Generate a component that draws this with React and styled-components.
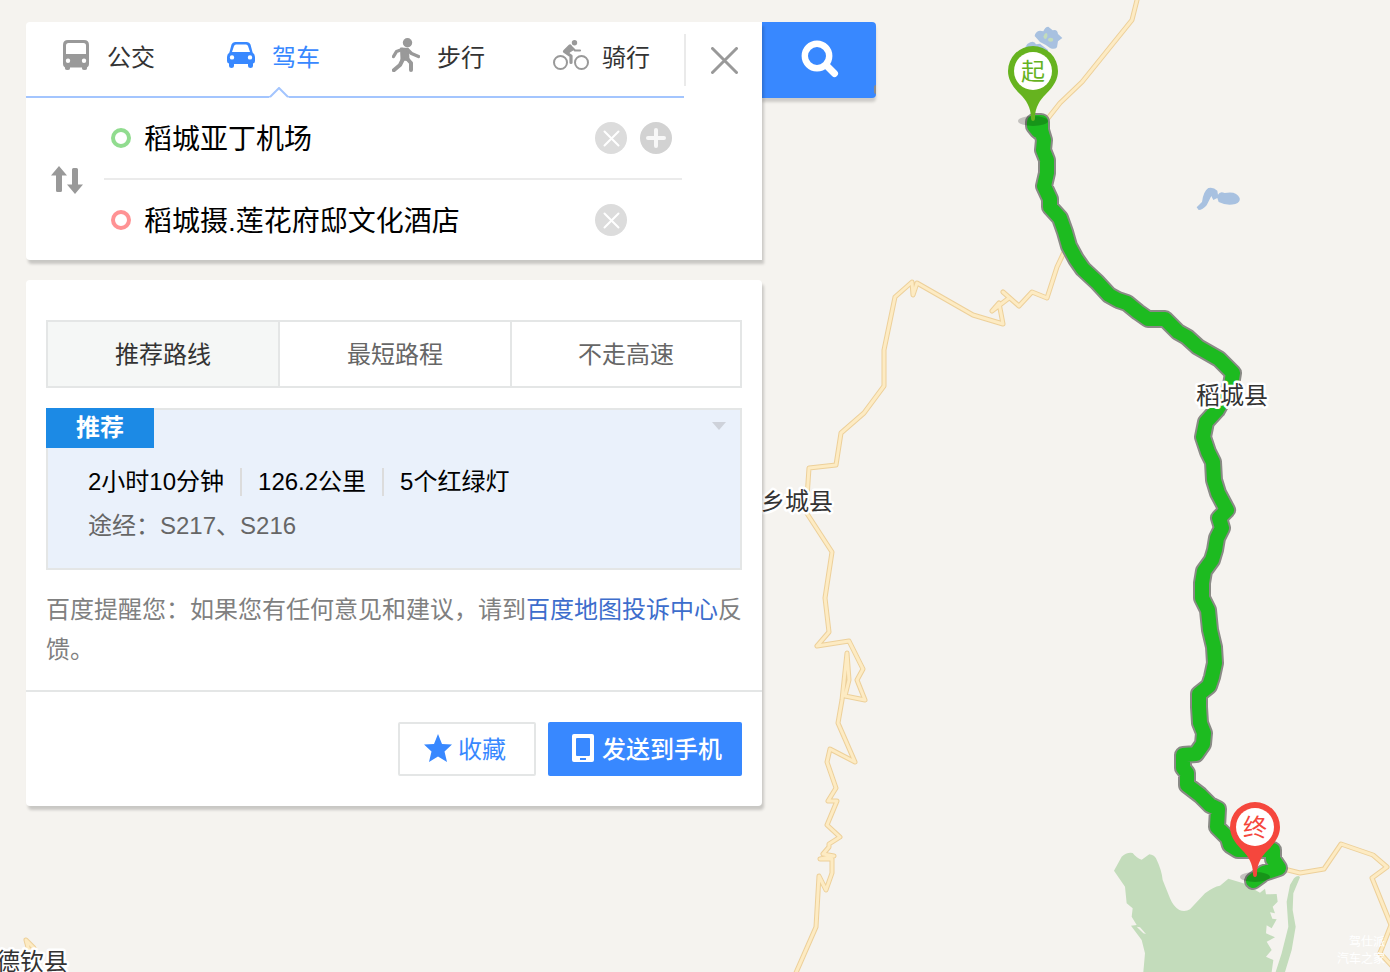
import React, { useState } from "react";
import styled, { createGlobalStyle } from "styled-components";

const GlobalStyle = createGlobalStyle`
  *, *::before, *::after { box-sizing: border-box; }
  body {
    margin: 0;
    background: #f5f3ef;
    font-family: "Liberation Sans", "Noto Sans CJK SC", sans-serif;
    font-size: 24px;
    color: #333;
  }
  button, input { font: inherit; color: inherit; margin: 0; padding: 0; border: 0; background: none; }
  button { cursor: pointer; }
  svg { display: block; }
`;

const Page = styled.main`
  position: relative;
  min-height: 100vh;
  padding: 22px 26px;
  overflow: hidden;
`;

const MapLayer = styled.div`
  position: absolute;
  inset: 0;
  overflow: hidden;
`;

const MapDrawing = styled.svg`
  width: 100%;
  height: 100%;
`;

const PlaceName = styled.text`
  font-size: 24px;
  fill: #333;
  stroke: #fff;
  stroke-width: 5px;
  stroke-linejoin: round;
  paint-order: stroke;
`;

const PinText = styled.text`
  font-size: 24px;
  text-anchor: middle;
`;

const Watermark = styled.text`
  font-size: 12px;
  fill: #fff;
  text-anchor: end;
`;

const Sidebar = styled.div`
  position: relative;
  display: flex;
  flex-direction: column;
  gap: 20px;
  width: fit-content;
  max-width: 100%;
`;

const SearchForm = styled.form`
  display: flex;
  align-items: flex-start;
`;

const Panel = styled.section`
  position: relative;
  z-index: 1;
  width: 736px;
  min-width: 0;
  max-width: 100%;
  background: #fff;
  border-radius: ${(p) => (p.$joined ? "4px 0 0 4px" : "4px")};
  box-shadow: 2px 4px 3px rgba(0, 0, 0, 0.18);
`;

const PanelHead = styled.div`
  display: flex;
  align-items: flex-start;
`;

const ModeTabs = styled.nav`
  flex: 1;
  display: flex;
  border-bottom: 2px solid #a3c5fe;
`;

const ModeTab = styled.button`
  position: relative;
  flex: 0 0 165px;
  display: flex;
  align-items: center;
  gap: 13px;
  height: 74px;
  padding: 0 0 8px 32px;
  color: ${(p) => (p.$active ? "#3888ff" : "#333")};
  white-space: nowrap;

  &:last-child {
    flex: 1 1 0;
  }
`;

const ModeIcon = styled.span`
  display: flex;
  justify-content: center;
  width: 36px;
  color: ${(p) => (p.$active ? "#3888ff" : "#999")};
`;

const Notch = styled.svg`
  position: absolute;
  left: 78px;
  bottom: -2px;
`;

const CloseButton = styled.button`
  display: flex;
  align-items: center;
  justify-content: center;
  width: 78px;
  height: 52px;
  margin-top: 12px;
  border-left: 2px solid #eaeaea;
`;

const Endpoints = styled.div`
  display: flex;
  padding-right: 80px;
`;

const SwapButton = styled.button`
  display: flex;
  align-items: center;
  justify-content: center;
  width: 78px;
  padding: 2px 0 0 4px;
`;

const EndpointRows = styled.div`
  flex: 1;
  min-width: 0;
`;

const EndpointRow = styled.div`
  display: grid;
  grid-template-columns: 20px 1fr 32px 32px;
  column-gap: 13px;
  align-items: center;
  height: 80px;
  padding: 0 10px 0 7px;

  & + & {
    height: 82px;
    border-top: 2px solid #ebebeb;
  }
`;

const Ring = styled.label`
  width: 20px;
  height: 20px;
  border: 4px solid ${(p) => p.$color};
  border-radius: 50%;
`;

const PlaceInput = styled.input`
  width: 100%;
  height: 44px;
  padding-bottom: 2px;
  font-size: 28px;
  color: #000;
  outline: none;
`;

const RoundButton = styled.button`
  display: flex;
  align-items: center;
  justify-content: center;
  width: 32px;
  height: 32px;
  border-radius: 50%;
  background: ${(p) => (p.$dark ? "#d2d2d2" : "#dcdcdc")};
`;

const SearchButton = styled.button`
  position: relative;
  display: flex;
  align-items: center;
  justify-content: center;
  flex: none;
  width: 114px;
  height: 76px;
  padding: 0 0 2px 2px;
  border-radius: 0 4px 4px 0;
  background: #3888ff;
  box-shadow: 0 4px 3px rgba(0, 0, 0, 0.16);

  &::after {
    content: "";
    position: absolute;
    right: 0;
    bottom: 4px;
    width: 2px;
    height: 9px;
    border-radius: 2px 0 0 2px;
    background: #8c8c8c;
  }
`;

const Results = styled.div`
  padding: 40px 20px 20px;
`;

const PlanTabs = styled.div`
  display: grid;
  grid-template-columns: repeat(3, 1fr);
`;

const PlanTab = styled.button`
  height: 68px;
  border: 2px solid #e4e6e6;
  border-right-width: 0;
  padding-bottom: 4px;
  background: ${(p) => (p.$active ? "#f5f7f6" : "#fff")};
  color: ${(p) => (p.$active ? "#333" : "#666")};

  &:last-child {
    border-right-width: 2px;
  }
`;

const RouteCard = styled.article`
  margin-top: 20px;
  padding-bottom: 20px;
  border: 2px solid #e4e6e6;
  background: #eaf1fb;
`;

const RouteHead = styled.header`
  display: flex;
  justify-content: space-between;
  margin: -2px 0 12px -2px;
`;

const Badge = styled.strong`
  width: 108px;
  height: 40px;
  background: #1c8ae5;
  color: #fff;
  font-weight: 700;
  line-height: 40px;
  text-align: center;
`;

const ExpandButton = styled.button`
  width: 42px;
  height: 40px;
  padding: 14px 14px 18px;
`;

const RouteLine = styled.div`
  display: flex;
  align-items: center;
  height: 44px;
  padding-left: 40px;
  line-height: 44px;
  color: ${(p) => (p.$muted ? "#666" : "#000")};
  white-space: nowrap;
`;

const RouteFact = styled.span`
  line-height: 28px;

  & + & {
    margin-left: 16px;
    padding-left: 16px;
    border-left: 2px solid #dcdcdc;
  }
`;

const Reminder = styled.p`
  margin: 20px 0 0;
  line-height: 40px;
  color: #808080;
`;

const ReminderLink = styled.a`
  color: #3d6dcc;
  text-decoration: none;
`;

const Actions = styled.footer`
  display: flex;
  justify-content: flex-end;
  gap: 12px;
  padding: 30px 20px;
  border-top: 2px solid #e4e6e6;
`;

const ActionButton = styled.button`
  display: flex;
  align-items: center;
  gap: ${(p) => (p.$primary ? "8px" : "6px")};
  height: 54px;
  padding: ${(p) => (p.$primary ? "0 20px 3px 24px" : "0 28px 3px 24px")};
  border: ${(p) => (p.$primary ? "0" : "2px solid #e4e6e6")};
  border-radius: 2px;
  background: ${(p) => (p.$primary ? "#3888ff" : "#fff")};
  color: ${(p) => (p.$primary ? "#fff" : "#3888ff")};
  font-weight: ${(p) => (p.$primary ? 500 : 400)};
`;

const BusIcon = () => (
  <svg width="26" height="30" viewBox="0 0 26 30">
    <path
      fill="currentColor"
      fillRule="evenodd"
      d="M5 0H21Q26 0 26 5V24Q26 27 24 27.500V28.500Q24 30 21.500 30T19 28.500V27.500H7V28.500Q7 30 4.500 30T2 28.500V27.500Q0 27 0 24V5Q0 0 5 0ZM5.500 3Q3 3 3 5.500V14H23V5.500Q23 3 20.500 3ZM5 18.500A2.200 2.200 0 1 0 5 22.900A2.200 2.200 0 1 0 5 18.500ZM21 18.500A2.200 2.200 0 1 0 21 22.900A2.200 2.200 0 1 0 21 18.500Z"
    />
  </svg>
);

const CarIcon = () => (
  <svg width="28" height="26" viewBox="0 0 28 26">
    <path
      fill="currentColor"
      fillRule="evenodd"
      d="M8 0H20Q22.500 0 23.500 2.500L25.600 10.500Q28 12 28 15V19Q28 21 26 21.500V24Q26 26 23.500 26T21 24V22H7V24Q7 26 4.500 26T2 24V21.500Q0 21 0 19V15Q0 12 2.400 10.500L4.500 2.500Q5.500 0 8 0ZM9 2.500Q7.500 2.500 7 4L5 10H23L21 4Q20.500 2.500 19 2.500ZM5 13.200A2.200 2.200 0 1 0 5 17.600A2.200 2.200 0 1 0 5 13.200ZM23 13.200A2.200 2.200 0 1 0 23 17.600A2.200 2.200 0 1 0 23 13.200Z"
    />
  </svg>
);

const WalkIcon = () => (
  <svg width="28" height="34" viewBox="0 0 28 34" fill="none" stroke="currentColor" strokeLinecap="round" strokeLinejoin="round">
    <circle cx="15.500" cy="4.700" r="4.700" fill="currentColor" stroke="none" />
    <path d="M9 10.500L16 11L16.500 22L9.500 21.500Z" fill="currentColor" strokeWidth="2" />
    <path d="M10 11.500L4.500 13.500L1.500 18.500" strokeWidth="3.400" />
    <path d="M16 12L19.500 15.500L26.500 18.500" strokeWidth="3.400" />
    <path d="M11 21L8 27L1.800 32.200" strokeWidth="4" />
    <path d="M14.500 20L19 25V32" strokeWidth="4" />
  </svg>
);

const BikeIcon = () => (
  <svg width="36" height="30" viewBox="0 0 36 30" fill="none" stroke="currentColor" strokeLinecap="round" strokeLinejoin="round">
    <circle cx="7.500" cy="22.500" r="6.500" strokeWidth="2" />
    <circle cx="28.500" cy="22.500" r="6.500" strokeWidth="2" />
    <circle cx="21.500" cy="2.700" r="2.700" fill="currentColor" stroke="none" />
    <path d="M17.500 6L22 10.500H27" strokeWidth="2.200" />
    <path d="M17 6L11.500 11.500L18 16V22.500" strokeWidth="3.200" />
    <path d="M18 7L20 10L15.500 13L11.500 11.500Z" fill="currentColor" strokeWidth="1" />
  </svg>
);

const CrossIcon = ({ size, color, width }) => (
  <svg width={size} height={size} viewBox={`0 0 ${size} ${size}`} stroke={color} strokeWidth={width} strokeLinecap="round">
    <path d={`M1.500 1.500L${size - 1.5} ${size - 1.5}M${size - 1.5} 1.500L1.500 ${size - 1.5}`} />
  </svg>
);

const PlusIcon = () => (
  <svg width="20" height="20" viewBox="0 0 20 20" stroke="#f7f7f7" strokeWidth="4" strokeLinecap="round">
    <path d="M10 2V18M2 10H18" />
  </svg>
);

const SwapIcon = () => (
  <svg width="32" height="28" viewBox="0 0 32 28" fill="#999">
    <path d="M8 0L16 9.500H11V24.500Q11 26 9.500 26H6.500Q5 26 5 24.500V9.500H0Z" />
    <path d="M24 28L16 18.500H21V3.500Q21 2 22.500 2H25.500Q27 2 27 3.500V18.500H32Z" />
  </svg>
);

const SearchIcon = () => (
  <svg width="38" height="38" viewBox="0 0 38 38" fill="none" stroke="#fff" strokeLinecap="round">
    <circle cx="16" cy="16" r="12.200" strokeWidth="6.400" />
    <path d="M26 26L33.500 33.500" strokeWidth="7" />
  </svg>
);

const StarIcon = () => (
  <svg width="28" height="28" viewBox="0 0 28 28" fill="currentColor">
    <path d="M14 0L18 10L28 10.500L20.500 17.500L23 28L14 22.500L5 28L7.500 17.500L0 10.500L10 10Z" />
  </svg>
);

const PhoneIcon = () => (
  <svg width="22" height="28" viewBox="0 0 22 28">
    <path
      fill="currentColor"
      fillRule="evenodd"
      d="M2 0H20Q22 0 22 2V26Q22 28 20 28H2Q0 28 0 26V2Q0 0 2 0ZM5 4Q4 4 4 5V21Q4 22 5 22H17Q18 22 18 21V5Q18 4 17 4ZM8 24V26H14V24Z"
    />
  </svg>
);

const roads = [
  "M1138 -4L1132 20L1082 82L1060 103L1045 122",
  "M1065 250L1057 267L1047 298L1032 292L1019 306L1003 292",
  "M1009 298L992 311L999 303L1003 324L973 315L917 283L913 295L912 282L895 297L884 350V386L864 413L841 433L836 465L809 468L806 512L832 552L825 598L829 632L817 646L849 641L863 669L857 680L865 700L845 696L849 680L847 653L842 700L838 723L855 762L830 749L827 762L836 788L828 801H837L827 825L840 837L829 844V847L823 854L834 856L820 859H832V873L826 890L819 876L816 927L795 975",
  "M1280 868L1300 873L1324 869L1341 844L1373 855L1387 867L1372 878L1391 925L1380 953L1392 966",
  "M26 940L34 948L29 951Z",
];

const route =
  "M1041 122L1034 122L1034 126L1038 131L1041 122V130L1044 140L1043 150L1047 160L1047 173L1044 186L1050 199L1050 207L1060 218L1065 232L1069 246L1076 259L1083 269L1097 282L1109 295L1118 300L1127 303L1138 312L1148 319H1165L1178 332L1187 337L1198 347L1219 359L1233 373L1231 385L1217 410L1206 422L1203 437L1208 452L1213 462L1214 480L1218 493L1227 510L1219 518L1222 528L1217 538L1215 550L1212 560L1204 571L1202 583V598L1208 610L1210 630L1214 647L1215 663L1212 677L1209 686L1199 694L1199 707L1200 723L1204 733L1203 744L1196 754L1183 755V768L1187 773V785L1200 795L1210 805L1218 809L1217 827L1228 838L1230 845L1238 850H1273V859L1279 868L1264 873L1253 881";

const Pin = ({ x, y, color, children }) => (
  <g transform={`translate(${x} ${y})`}>
    <ellipse cx="0" cy="50" rx="15" ry="5" fill="#000" fillOpacity="0.2" />
    <path fill={color} d="M0 -25A25 25 0 0 1 25 0C25 8 21 15 13 23C7 29 2 36 2 47Q2 50 0 50T-2 47C-2 36 -7 29 -13 23C-21 15 -25 8 -25 0A25 25 0 0 1 0 -25Z" />
    <circle r="19" fill="#fff" />
    <PinText y="9" fill={color}>{children}</PinText>
  </g>
);

const RouteMap = () => (
  <MapLayer>
    <MapDrawing viewBox="0 0 1390 972" preserveAspectRatio="xMinYMin slice" role="img" aria-label="路线地图">
      <g transform="translate(1090 720) scale(0.33333)" fill="#c3dcbb">
        <path d="M72 452L95 410Q110 396 128 399Q140 415 155 419L178 403Q192 404 198 415Q215 450 218 480L240 535Q250 560 268 570Q285 577 300 568L345 520Q370 500 390 497L415 476L460 490L510 518L525 506L528 523L560 522L563 545L548 560L555 580L540 577L547 596L560 598L545 625L530 616L528 640L555 652L530 665L545 690L528 710L550 720L545 756H160L165 700L155 660L123 617L140 615L125 590L128 565L110 550L105 500Z" />
        <path d="M612 475Q625 462 630 472L610 520L608 570L617 620L605 690L585 756H557L575 700L595 620L590 545L600 495Z" />
        <path d="M140 620L150 622L168 642L160 640Z" fill="#f5f3ef" />
      </g>
      <g transform="scale(0.33333)" fill="#a8c1e0">
        <path d="M3104 108Q3106 94 3120 92L3130 94Q3135 80 3145 80L3158 91Q3172 86 3174 102L3187 114L3174 124L3171 142Q3164 150 3150 144Q3134 132 3120 126Z" />
        <path d="M3073 146L3082 132Q3102 118 3108 133L3120 131L3144 150V170H3073Z" />
        <path d="M3130 110Q3136 94 3142 102V110Q3136 124 3130 110ZM3144 119A8 6 0 1 1 3160 119A8 6 0 1 1 3144 119Z" fill="#c3dcbb" />
        <path d="M3590 622L3606 606Q3610 574 3625 564Q3640 560 3652 572L3654 584Q3660 572 3674 579Q3710 572 3719 594Q3722 606 3706 612Q3680 618 3656 606L3652 594L3640 600L3634 588L3620 616Q3608 630 3596 630Z" />
      </g>
      <g fill="none" strokeLinecap="round" strokeLinejoin="round">
        {roads.map((d) => <path key={d} d={d} stroke="#edd09a" strokeWidth="5" />)}
        {roads.map((d) => <path key={d} d={d} stroke="#fdebc3" strokeWidth="3" />)}
        <path d={route} stroke="#8a8a86" strokeWidth="18" />
        <path d={route} stroke="#1dbb20" strokeWidth="14" />
      </g>
      <PlaceName x="1196" y="404">稻城县</PlaceName>
      <PlaceName x="761" y="510">乡城县</PlaceName>
      <PlaceName x="-4" y="970">德钦县</PlaceName>
      <Pin x={1033} y={71} color="#66b31f">起</Pin>
      <Pin x={1255} y={827} color="#f5473d">终</Pin>
      <Watermark x="1385" y="946">驾仕派</Watermark>
      <Watermark x="1385" y="963">汽车之家</Watermark>
    </MapDrawing>
  </MapLayer>
);

const modes = [
  { name: "公交", Icon: BusIcon },
  { name: "驾车", Icon: CarIcon },
  { name: "步行", Icon: WalkIcon },
  { name: "骑行", Icon: BikeIcon },
];

const plans = ["推荐路线", "最短路程", "不走高速"];

export default function App() {
  const [mode, setMode] = useState("驾车");
  const [plan, setPlan] = useState("推荐路线");
  const [from, setFrom] = useState("稻城亚丁机场");
  const [to, setTo] = useState("稻城摄.莲花府邸文化酒店");

  const swap = () => {
    setFrom(to);
    setTo(from);
  };

  return (
    <>
      <GlobalStyle />
      <Page>
        <RouteMap />
        <Sidebar>
          <SearchForm onSubmit={(e) => e.preventDefault()}>
            <Panel $joined>
              <PanelHead>
                <ModeTabs>
                  {modes.map(({ name, Icon }) => (
                    <ModeTab key={name} type="button" $active={name === mode} onClick={() => setMode(name)}>
                      <ModeIcon $active={name === mode}><Icon /></ModeIcon>
                      {name}
                      {name === mode && (
                        <Notch width="20" height="11" viewBox="0 0 20 11">
                          <path d="M0 11L10 1L20 11Z" fill="#fff" />
                          <path d="M1 10L10 1L19 10" fill="none" stroke="#a3c5fe" strokeWidth="2" />
                        </Notch>
                      )}
                    </ModeTab>
                  ))}
                </ModeTabs>
                <CloseButton type="button" aria-label="关闭">
                  <CrossIcon size={27} color="#999" width={3} />
                </CloseButton>
              </PanelHead>
              <Endpoints>
                <SwapButton type="button" aria-label="交换起点和终点" onClick={swap}>
                  <SwapIcon />
                </SwapButton>
                <EndpointRows>
                  <EndpointRow>
                    <Ring htmlFor="from" $color="#91dc8f" />
                    <PlaceInput id="from" aria-label="起点" value={from} onChange={(e) => setFrom(e.target.value)} />
                    <RoundButton type="button" aria-label="清除起点" onClick={() => setFrom("")}>
                      <CrossIcon size={17} color="#fff" width={2} />
                    </RoundButton>
                    <RoundButton type="button" aria-label="添加途经点" $dark>
                      <PlusIcon />
                    </RoundButton>
                  </EndpointRow>
                  <EndpointRow>
                    <Ring htmlFor="to" $color="#ff9294" />
                    <PlaceInput id="to" aria-label="终点" value={to} onChange={(e) => setTo(e.target.value)} />
                    <RoundButton type="button" aria-label="清除终点" onClick={() => setTo("")}>
                      <CrossIcon size={17} color="#fff" width={2} />
                    </RoundButton>
                  </EndpointRow>
                </EndpointRows>
              </Endpoints>
            </Panel>
            <SearchButton type="submit" aria-label="搜索">
              <SearchIcon />
            </SearchButton>
          </SearchForm>

          <Panel>
            <Results>
              <PlanTabs>
                {plans.map((name) => (
                  <PlanTab key={name} type="button" $active={name === plan} onClick={() => setPlan(name)}>
                    {name}
                  </PlanTab>
                ))}
              </PlanTabs>
              <RouteCard>
                <RouteHead>
                  <Badge>推荐</Badge>
                  <ExpandButton type="button" aria-label="展开">
                    <svg width="14" height="8" viewBox="0 0 14 8" fill="#ced2da">
                      <path d="M0 0H14L7 8Z" />
                    </svg>
                  </ExpandButton>
                </RouteHead>
                <RouteLine>
                  <RouteFact>2小时10分钟</RouteFact>
                  <RouteFact>126.2公里</RouteFact>
                  <RouteFact>5个红绿灯</RouteFact>
                </RouteLine>
                <RouteLine $muted>途经：S217、S216</RouteLine>
              </RouteCard>
              <Reminder>
                百度提醒您：如果您有任何意见和建议，请到<ReminderLink href="#complaints">百度地图投诉中心</ReminderLink>反馈。
              </Reminder>
            </Results>
            <Actions>
              <ActionButton type="button">
                <StarIcon />
                收藏
              </ActionButton>
              <ActionButton type="button" $primary>
                <PhoneIcon />
                发送到手机
              </ActionButton>
            </Actions>
          </Panel>
        </Sidebar>
      </Page>
    </>
  );
}
